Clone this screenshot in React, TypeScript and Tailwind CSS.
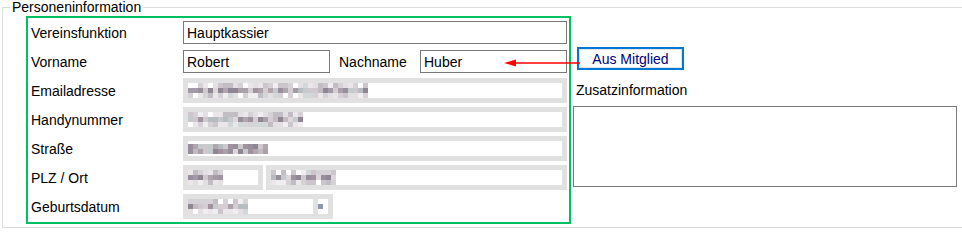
import React from "react";

const shades = ["#a0929f", "#c2bbbf", "#ab a1ab".replace(" ", ""), "#cfc8cd", "#8f8593", "#ddd7db", "#b6bcbf", "#a29aa6", "#d4cdd2", "#b1a6ad", "#978f9b", "#c5cacc"];
const lightShades = ["#d6d1d6", "#e3dfe3", "#ccc5cc", "#eae6ea", "#c2bcc4", "#f0eef0", "#d2d7d8", "#ffffff"];

// blurred / pixelated placeholder for hidden personal data
function Mosaic({ cols, rows, seed }: { cols: number; rows: number; seed: number }) {
  let s = seed;
  const next = () => {
    s = (s * 9301 + 49297) % 233280;
    return s / 233280;
  };
  const grid = Array.from({ length: rows }, (_, r) =>
    Array.from({ length: cols }, () => {
      const outer = rows > 2 && (r === 0 || r === rows - 1);
      const list = outer ? lightShades : shades;
      return list[Math.floor(next() * list.length)];
    })
  );
  return (
    <div className="flex flex-col">
      {grid.map((row, i) => (
        <div key={i} className="flex">
          {row.map((c, j) => (
            <span key={j} className="block w-[5px] h-[5px]" style={{ background: c }} />
          ))}
        </div>
      ))}
    </div>
  );
}

function HiddenField({ cols, rows = 3, seed, className = "" }: { cols: number; rows?: number; seed: number; className?: string }) {
  return (
    <div className={`h-[25px] border-[5px] border-[#e1e1e1] bg-white flex items-center ${className}`}>
      <Mosaic cols={cols} rows={rows} seed={seed} />
    </div>
  );
}

function TextBox({ value, className = "" }: { value: string; className?: string }) {
  return (
    <input
      readOnly
      value={value}
      className={`h-[23px] border border-[#7a7a7a] bg-white px-[3px] text-[14px] leading-[21px] text-black outline-none ${className}`}
    />
  );
}

function Row({ label, children }: { label: string; children: React.ReactNode }) {
  return (
    <div className="flex items-center h-[29px]">
      <div className="w-[152px] text-[14px] leading-[16px] text-black">{label}</div>
      {children}
    </div>
  );
}

export default function App() {
  return (
    <div className="w-[962px] h-[232px] bg-white font-['Liberation_Sans',Arial,sans-serif] overflow-hidden">
      <fieldset className="ml-[2px] w-[960px] border border-r-0 border-[#dcdcdc] p-0 pb-[3px]">
        <legend className="ml-[7px] px-[2px] text-[14px] leading-[14px] text-black">Personeninformation</legend>

        <div className="relative flex">
          {/* Mitgliedsdaten */}
          <div className="ml-[23px] mt-[2px] w-[545px] border-2 border-[#00c060] pl-[3px] pr-[2px] pb-[1px]">
            <Row label="Vereinsfunktion">
              <TextBox value="Hauptkassier" className="w-[384px]" />
            </Row>
            <Row label="Vorname">
              <TextBox value="Robert" className="w-[147px]" />
              <div className="ml-[9px] w-[81px] text-[14px] leading-[16px] text-black">Nachname</div>
              <TextBox value="Huber" className="w-[147px]" />
            </Row>
            <Row label="Emailadresse">
              <HiddenField cols={36} seed={17} className="w-[384px]" />
            </Row>
            <Row label="Handynummer">
              <HiddenField cols={23} seed={53} className="w-[384px]" />
            </Row>
            <Row label="Straße">
              <HiddenField cols={16} rows={2} seed={91} className="w-[384px]" />
            </Row>
            <Row label="PLZ / Ort">
              <div className="flex w-[384px] gap-[3px]">
                <HiddenField cols={7} seed={7} className="w-[80px]" />
                <HiddenField cols={13} seed={29} className="flex-1" />
              </div>
            </Row>
            <Row label="Geburtsdatum">
              <div className="h-[25px] w-[150px] border-[5px] border-[#e1e1e1] bg-white flex items-center">
                <Mosaic cols={12} rows={3} seed={71} />
                <div className="ml-auto h-full w-[15px] border-l-[5px] border-[#e1e1e1] flex items-center">
                  <span className="block w-[5px] h-[5px] bg-[#8e98aa]" />
                </div>
              </div>
            </Row>
          </div>

          {/* rechte Spalte */}
          <div className="flex flex-col">
            <button className="ml-[6px] mt-[33px] h-[23px] w-[107px] border-2 border-[#0078d7] bg-white shadow-[inset_0_0_0_1px_#e3e3e3] text-[14px] leading-[16px] text-[#000080]">
              Aus Mitglied
            </button>
            <div className="ml-[5px] mt-[12px] text-[14px] leading-[16px] text-black">Zusatzinformation</div>
            <textarea readOnly className="ml-[2px] mt-[8px] h-[81px] w-[384px] resize-none border border-[#7a7a7a] bg-white outline-none" />
          </div>

          {/* Pfeil */}
          <svg className="absolute left-[501px] top-[44px]" width="76" height="10" viewBox="0 0 76 10">
            <line x1="10" y1="5" x2="76" y2="5" stroke="#ff0000" strokeWidth="1.5" />
            <polygon points="0,5 12,1.5 12,8.5" fill="#ff0000" />
          </svg>
        </div>
      </fieldset>
    </div>
  );
}
